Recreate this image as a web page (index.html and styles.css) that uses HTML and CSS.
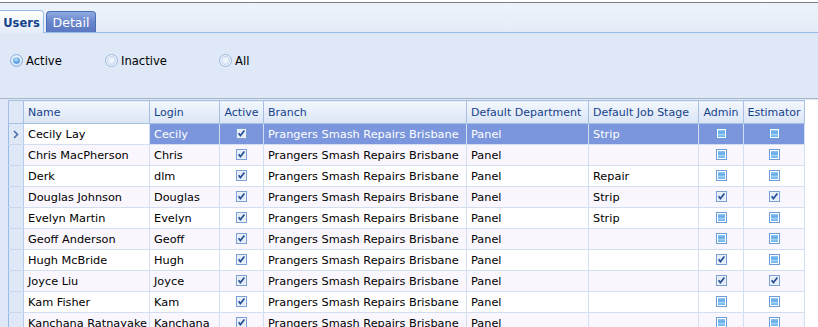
FILE: index.html
```html
<!DOCTYPE html>
<html>
<head>
<meta charset="utf-8">
<link rel="stylesheet" href="styles.css">
</head>
<body>
<div class="topline"></div>
<div class="tabstrip">
  <div class="tab tab-active">Users</div>
  <div class="tab tab-other">Detail</div>
</div>
<div class="panel">
  <div class="radios">
    <label class="radio r1"><svg width="13" height="13" viewBox="0 0 13 13"><defs><radialGradient id="rg1" cx="50%" cy="40%" r="60%"><stop offset="0" stop-color="#ffffff"/><stop offset="1" stop-color="#c9dcf3"/></radialGradient><radialGradient id="dot" cx="45%" cy="35%" r="70%"><stop offset="0" stop-color="#bfe3ff"/><stop offset="1" stop-color="#2f86d9"/></radialGradient></defs><circle cx="6.5" cy="6.5" r="6" fill="url(#rg1)" stroke="#8fb0dc"/><circle cx="6.5" cy="6.5" r="3.3" fill="url(#dot)"/></svg><span>Active</span></label>
    <label class="radio r2"><svg width="13" height="13" viewBox="0 0 13 13"><circle cx="6.5" cy="6.5" r="6" fill="#eef4fc" stroke="#9ab7df"/><circle cx="6.5" cy="6.5" r="3.8" fill="none" stroke="#c3d6ef" stroke-width="1.2"/></svg><span>Inactive</span></label>
    <label class="radio r3"><svg width="13" height="13" viewBox="0 0 13 13"><circle cx="6.5" cy="6.5" r="6" fill="#eef4fc" stroke="#9ab7df"/><circle cx="6.5" cy="6.5" r="3.8" fill="none" stroke="#c3d6ef" stroke-width="1.2"/></svg><span>All</span></label>
  </div>
</div>
<div class="gridwrap">
<table class="grid">
  <colgroup>
    <col class="c-ind"><col class="c-name"><col class="c-login"><col class="c-act"><col class="c-branch"><col class="c-dept"><col class="c-stage"><col class="c-admin"><col class="c-est"><col class="c-fill">
  </colgroup>
  <thead>
    <tr><th class="ind"></th><th>Name</th><th>Login</th><th class="ctr">Active</th><th>Branch</th><th>Default Department</th><th>Default Job Stage</th><th class="ctr">Admin</th><th class="ctr">Estimator</th><th class="fill"></th></tr>
  </thead>
  <tbody>
    <tr class="sel"><td class="ind"><svg class="arrow" width="6" height="9" viewBox="0 0 6 9"><path d="M1 1 L4.5 4.5 L1 8" fill="none" stroke="#4a6aa8" stroke-width="1.6"/></svg></td><td class="focus">Cecily Lay</td><td>Cecily</td><td class="ctr"><i class="cb on"></i></td><td>Prangers Smash Repairs Brisbane</td><td>Panel</td><td>Strip</td><td class="ctr"><i class="cb off"></i></td><td class="ctr"><i class="cb off"></i></td><td class="fill"></td></tr>
    <tr class="alt"><td class="ind"></td><td>Chris MacPherson</td><td>Chris</td><td class="ctr"><i class="cb on"></i></td><td>Prangers Smash Repairs Brisbane</td><td>Panel</td><td></td><td class="ctr"><i class="cb off"></i></td><td class="ctr"><i class="cb off"></i></td><td class="fill"></td></tr>
    <tr><td class="ind"></td><td>Derk</td><td>dlm</td><td class="ctr"><i class="cb on"></i></td><td>Prangers Smash Repairs Brisbane</td><td>Panel</td><td>Repair</td><td class="ctr"><i class="cb off"></i></td><td class="ctr"><i class="cb off"></i></td><td class="fill"></td></tr>
    <tr class="alt"><td class="ind"></td><td>Douglas Johnson</td><td>Douglas</td><td class="ctr"><i class="cb on"></i></td><td>Prangers Smash Repairs Brisbane</td><td>Panel</td><td>Strip</td><td class="ctr"><i class="cb on"></i></td><td class="ctr"><i class="cb on"></i></td><td class="fill"></td></tr>
    <tr><td class="ind"></td><td>Evelyn Martin</td><td>Evelyn</td><td class="ctr"><i class="cb on"></i></td><td>Prangers Smash Repairs Brisbane</td><td>Panel</td><td>Strip</td><td class="ctr"><i class="cb off"></i></td><td class="ctr"><i class="cb off"></i></td><td class="fill"></td></tr>
    <tr class="alt"><td class="ind"></td><td>Geoff Anderson</td><td>Geoff</td><td class="ctr"><i class="cb on"></i></td><td>Prangers Smash Repairs Brisbane</td><td>Panel</td><td></td><td class="ctr"><i class="cb off"></i></td><td class="ctr"><i class="cb off"></i></td><td class="fill"></td></tr>
    <tr><td class="ind"></td><td>Hugh McBride</td><td>Hugh</td><td class="ctr"><i class="cb on"></i></td><td>Prangers Smash Repairs Brisbane</td><td>Panel</td><td></td><td class="ctr"><i class="cb on"></i></td><td class="ctr"><i class="cb off"></i></td><td class="fill"></td></tr>
    <tr class="alt"><td class="ind"></td><td>Joyce Liu</td><td>Joyce</td><td class="ctr"><i class="cb on"></i></td><td>Prangers Smash Repairs Brisbane</td><td>Panel</td><td></td><td class="ctr"><i class="cb on"></i></td><td class="ctr"><i class="cb on"></i></td><td class="fill"></td></tr>
    <tr><td class="ind"></td><td>Kam Fisher</td><td>Kam</td><td class="ctr"><i class="cb on"></i></td><td>Prangers Smash Repairs Brisbane</td><td>Panel</td><td></td><td class="ctr"><i class="cb off"></i></td><td class="ctr"><i class="cb off"></i></td><td class="fill"></td></tr>
    <tr class="alt"><td class="ind"></td><td>Kanchana Ratnayake</td><td>Kanchana</td><td class="ctr"><i class="cb on"></i></td><td>Prangers Smash Repairs Brisbane</td><td>Panel</td><td></td><td class="ctr"><i class="cb off"></i></td><td class="ctr"><i class="cb off"></i></td><td class="fill"></td></tr>
  </tbody>
</table>
</div>
</body>
</html>
```
FILE: styles.css
```css
html, body {
  margin: 0;
  padding: 0;
  width: 818px;
  height: 327px;
  overflow: hidden;
  background: #ffffff;
  font-family: "DejaVu Sans", Verdana, sans-serif;
  font-size: 11.3px;
  color: #000000;
}
.topline {
  height: 1px;
  margin-top: 2px;
  background: #7a7f88;
}
.tabstrip {
  height: 30px;
  background: linear-gradient(#eef3fa, #e4ecf8);
  display: flex;
  align-items: flex-end;
  gap: 2px;
  border-bottom: 1px solid #99bbe8;
  box-sizing: border-box;
}
.tab {
  box-sizing: border-box;
  display: flex;
  align-items: center;
  justify-content: center;
  border-radius: 0 4px 0 0;
}
.tab-active {
  width: 44px;
  height: 23px;
  margin-bottom: -1px;
  background: linear-gradient(#ffffff, #e3ecf9);
  border: 1px solid #99bbe8;
  border-left: none;
  border-bottom: none;
  color: #15428b;
  font-weight: bold;
  font-size: 11.5px;
  padding-top: 1px;
}
.tab-other {
  width: 50px;
  height: 21px;
  background: linear-gradient(#8faae0, #6986cc 50%, #5a79c2);
  border: 1px solid #4a6eb3;
  border-bottom: none;
  border-radius: 4px 4px 0 0;
  color: #ffffff;
  padding-top: 1px;
  font-size: 12.5px;
}
.panel {
  height: 66px;
  background: #dfe8f6;
  border-bottom: 1px solid #a9b5c6;
  box-sizing: border-box;
  display: flex;
  align-items: center;
  padding-left: 10px;
  font-size: 11.6px;
}
.radios {
  display: flex;
  align-items: center;
  margin-top: -10px;
}
.radio {
  display: flex;
  align-items: center;
  gap: 3px;
}
.radio svg { display: block; }
.r1 { width: 95px; }
.r2 { width: 114px; }
.gridwrap {
  background: #dfe8f6;
  padding-left: 8px;
  padding-top: 1px;
  height: 230px;
}
.grid {
  border-collapse: collapse;
  table-layout: fixed;
  width: 810px;
  background: #ffffff;
}
.c-ind { width: 15px; }
.c-name { width: 126px; }
.c-login { width: 70px; }
.c-act { width: 44px; }
.c-branch { width: 203px; }
.c-dept { width: 122px; }
.c-stage { width: 110px; }
.c-admin { width: 45px; }
.c-est { width: 61px; }
.c-fill { width: 14px; }
.grid th {
  height: 23px;
  padding: 0 0 0 4px;
  box-sizing: border-box;
  text-align: left;
  font-weight: normal;
  font-size: 11px;
  color: #15428b;
  background: linear-gradient(#f3f7fd, #dae5f5);
  border: 1px solid #a7bfe2;
  white-space: nowrap;
  overflow: hidden;
}
.grid th.ctr { text-align: center; padding: 0; }
.grid th.ind { padding: 0; background: #dfe8f6; }
.grid th.fill { background: #ffffff; border: none; border-left: 1px solid #a7bfe2; }
.grid td {
  height: 21px;
  box-sizing: border-box;
  padding: 0 0 0 4px;
  border-bottom: 1px solid #d3def0;
  border-right: 1px solid #d3def0;
  white-space: nowrap;
  overflow: hidden;
}
.grid tr.alt td { background: #faf6fd; }
.grid td.ctr { text-align: center; padding: 0; }
.grid td.ind {
  padding: 0;
  background: #dfe8f6;
  border-left: 1px solid #99bbe8;
  border-right: 1px solid #b9cde9;
  border-bottom: 1px solid #c8d8ef;
  text-align: center;
}
.grid tr.alt td.ind { background: #dfe8f6; }
.grid td.fill, .grid tr.alt td.fill { background: #ffffff; border: none; border-left: 1px solid #d3def0; }
.grid tr.sel td { background: #7b96dc; color: #ffffff; }
.grid tr.sel td.ind { background: #dfe8f6; }
.grid tr.sel td.fill { background: #ffffff; }
.grid tr.sel td.focus { background: #ffffff; color: #000000; }
.arrow {
  display: block;
  margin: 0 0 0 4px;
}
.cb {
  display: inline-block;
  width: 11px;
  height: 11px;
  vertical-align: middle;
  position: relative;
  top: -1px;
  background-repeat: no-repeat;
}
.cb.on {
  background-image: url("data:image/svg+xml;utf8,<svg xmlns='http://www.w3.org/2000/svg' width='11' height='11'><rect x='0.5' y='0.5' width='10' height='10' fill='%23f4f8fd' stroke='%237a9fd6'/><rect x='1.5' y='1.5' width='8' height='8' fill='%23e3ecf8'/><path d='M2.6 5.2 L4.4 7.6 L8.4 2.6' fill='none' stroke='%23234d96' stroke-width='1.6'/></svg>");
}
.cb.off {
  background-image: url("data:image/svg+xml;utf8,<svg xmlns='http://www.w3.org/2000/svg' width='11' height='11'><defs><linearGradient id='g' x1='0' y1='0' x2='0' y2='1'><stop offset='0' stop-color='%2395c9f3'/><stop offset='0.45' stop-color='%2355a3e6'/><stop offset='0.55' stop-color='%23aad6f6'/><stop offset='1' stop-color='%2367b2ec'/></linearGradient></defs><rect x='0.5' y='0.5' width='10' height='10' fill='%23ffffff' stroke='%236b9ddc'/><rect x='2' y='2' width='7' height='7' fill='url(%23g)'/></svg>");
}
```
